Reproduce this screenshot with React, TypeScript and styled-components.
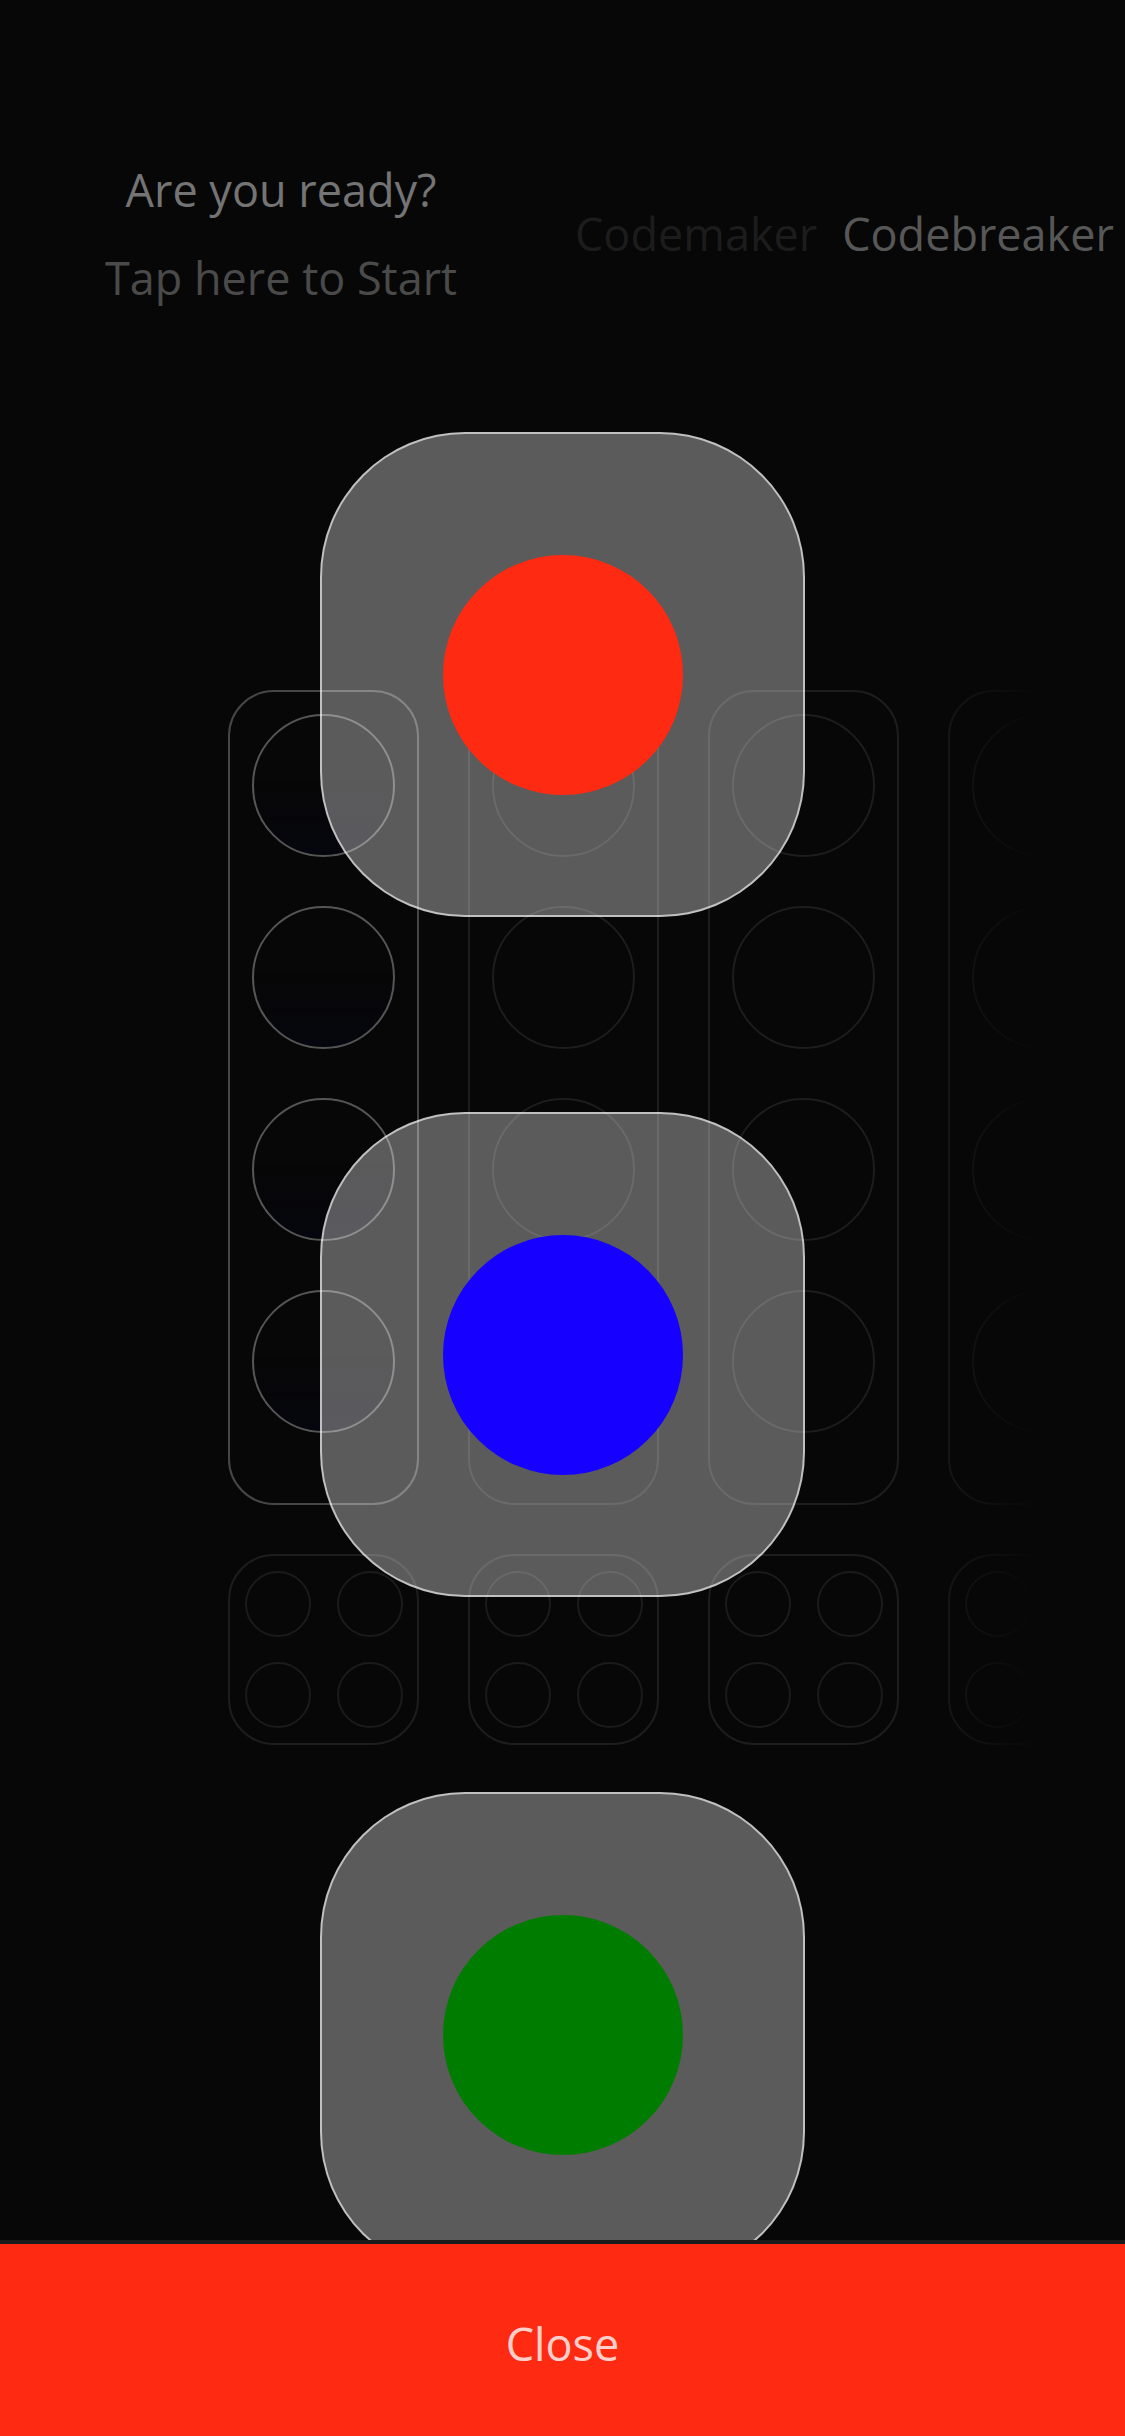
import React from "react";
import styled, { createGlobalStyle, css } from "styled-components";

const GlobalStyle = createGlobalStyle`
  html, body {
    margin: 0;
    padding: 0;
    background: #070707;
  }
  body {
    font-family: "Open Sans", "Noto Sans", "Liberation Sans", sans-serif;
    -webkit-font-smoothing: antialiased;
  }
  * { box-sizing: border-box; }
`;

const Page = styled.div`
  position: relative;
  width: 1125px;
  height: 2436px;
  overflow: hidden;
  background: #070707;
  display: flex;
  flex-direction: column;
`;

const Header = styled.header`
  display: grid;
  grid-template-columns: 562px auto;
  column-gap: 13px;
  align-items: center;
  padding-top: 146px;
  font-size: 45px;
`;

const StartPrompt = styled.button`
  all: unset;
  display: flex;
  flex-direction: column;
  align-items: center;
  line-height: 88px;
  font-size: 45px;
  font-family: "Open Sans", "Noto Sans", sans-serif;
  cursor: pointer;
`;

const PromptLine = styled.span<{ $dim?: boolean }>`
  color: ${(p) => (p.$dim ? "#4a4a4a" : "#747474")};
  white-space: nowrap;
`;

const RoleToggle = styled.div`
  display: flex;
  gap: 25px;
  line-height: 88px;
  white-space: nowrap;
`;

const RoleOption = styled.span<{ $active?: boolean }>`
  color: ${(p) => (p.$active ? "#575757" : "#1c1c1c")};
`;

const Board = styled.div`
  display: grid;
  grid-template-columns: repeat(4, 191px);
  column-gap: 49px;
  row-gap: 49px;
  margin-top: 368px;
  padding-left: 228px;
  width: 1125px;
  -webkit-mask-image: linear-gradient(to right, #000 0, #000 900px, transparent 1040px);
  mask-image: linear-gradient(to right, #000 0, #000 900px, transparent 1040px);
`;

const GuessColumn = styled.div<{ $active?: boolean }>`
  display: flex;
  flex-direction: column;
  align-items: center;
  gap: 49px;
  width: 191px;
  height: 815px;
  padding: 22px 0 0;
  border-radius: 46px;
  border: 2px solid ${(p) => (p.$active ? "#464646" : "#1d1d1d")};
`;

const Slot = styled.div<{ $active?: boolean }>`
  width: 143px;
  height: 143px;
  flex: none;
  border-radius: 50%;
  border: 2px solid ${(p) => (p.$active ? "#555555" : "#1d1d1d")};
  ${(p) =>
    p.$active &&
    css`
      background: linear-gradient(180deg, rgba(0, 0, 0, 0) 45%, rgba(2, 4, 30, 0.3) 100%);
    `}
`;

const FeedbackBox = styled.div`
  display: grid;
  grid-template-columns: repeat(2, 66px);
  grid-template-rows: repeat(2, 66px);
  column-gap: 26px;
  row-gap: 25px;
  place-content: center;
  width: 191px;
  height: 191px;
  border-radius: 46px;
  border: 2px solid #1d1d1d;
`;

const Peg = styled.div`
  width: 66px;
  height: 66px;
  border-radius: 50%;
  border: 2px solid #1b1b1b;
`;

const PickerOverlay = styled.div`
  position: absolute;
  top: 432px;
  left: 0;
  right: 0;
  display: flex;
  flex-direction: column;
  align-items: center;
  gap: 195px;
`;

const ColorTile = styled.button`
  all: unset;
  display: flex;
  align-items: center;
  justify-content: center;
  width: 485px;
  height: 485px;
  border-radius: 145px;
  background: rgba(255, 255, 255, 0.343);
  border: 2px solid rgba(255, 255, 255, 0.62);
  box-sizing: border-box;
  cursor: pointer;
`;

const Swatch = styled.span<{ $color: string }>`
  width: 240px;
  height: 240px;
  border-radius: 50%;
  background: ${(p) => p.$color};
`;

const CloseBar = styled.button`
  all: unset;
  position: absolute;
  left: 0;
  right: 0;
  bottom: 0;
  height: 196px;
  display: flex;
  align-items: center;
  justify-content: center;
  padding-top: 6px;
  background: #ff2a12;
  border-top: 4px solid #1b1b1b;
  box-sizing: border-box;
  color: rgba(255, 255, 255, 0.8);
  font-family: "Open Sans", "Noto Sans", sans-serif;
  font-size: 45px;
  cursor: pointer;
`;

const COLORS = ["#ff2a12", "#1600ff", "#007d00"];

export default function App() {
  const columns = [0, 1, 2, 3];
  return (
    <>
      <GlobalStyle />
      <Page>
        <Header>
          <StartPrompt>
            <PromptLine>Are you ready?</PromptLine>
            <PromptLine $dim>Tap here to Start</PromptLine>
          </StartPrompt>
          <RoleToggle>
            <RoleOption>Codemaker</RoleOption>
            <RoleOption $active>Codebreaker</RoleOption>
          </RoleToggle>
        </Header>
        <Board>
          {columns.map((c) => (
            <GuessColumn key={`g${c}`} $active={c === 0}>
              {[0, 1, 2, 3].map((s) => (
                <Slot key={s} $active={c === 0} />
              ))}
            </GuessColumn>
          ))}
          {columns.map((c) => (
            <FeedbackBox key={`f${c}`}>
              {[0, 1, 2, 3].map((s) => (
                <Peg key={s} />
              ))}
            </FeedbackBox>
          ))}
        </Board>
        <PickerOverlay>
          {COLORS.map((color) => (
            <ColorTile key={color}>
              <Swatch $color={color} />
            </ColorTile>
          ))}
        </PickerOverlay>
        <CloseBar>Close</CloseBar>
      </Page>
    </>
  );
}
